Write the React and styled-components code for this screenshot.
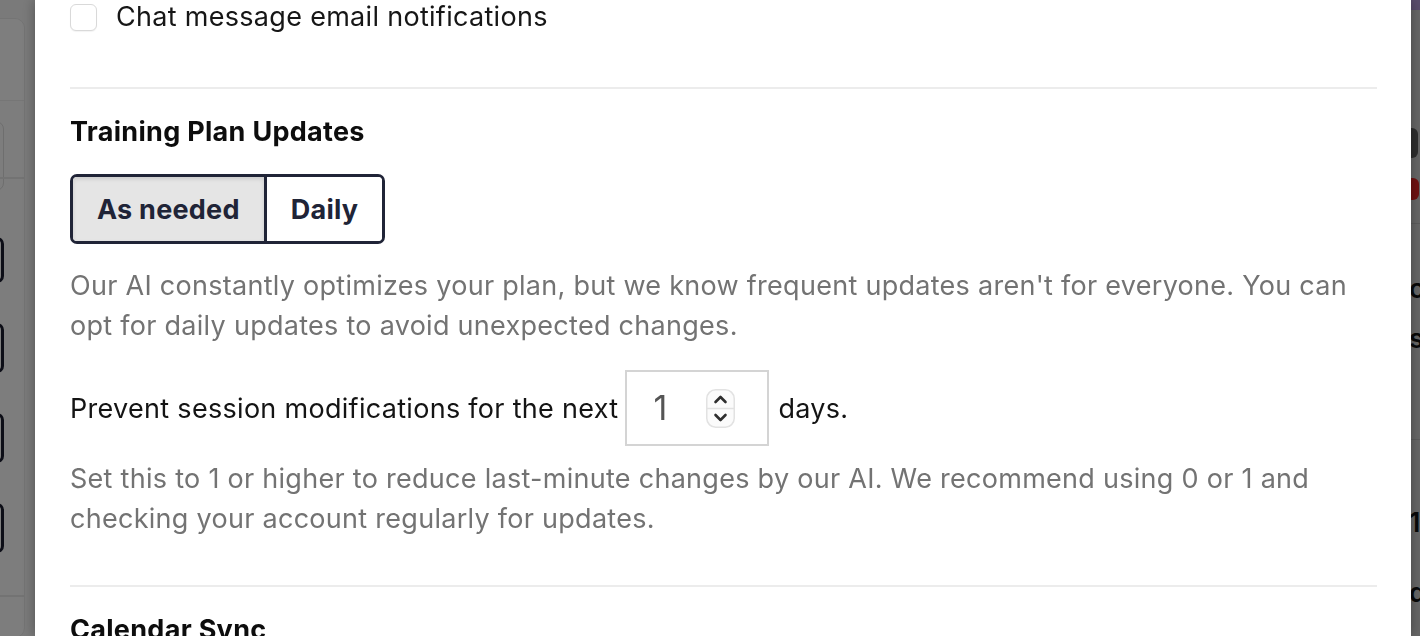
import React from "react";
import styled, { createGlobalStyle } from "styled-components";

const GlobalStyle = createGlobalStyle`
  * { box-sizing: border-box; }
  html, body { margin: 0; padding: 0; height: 100%; overflow: hidden; }
  body { font-family: Inter, "Noto Sans", "Liberation Sans", sans-serif; background: #f5f5f5; }
`;

/* ---------- background page peeking out on both sides ---------- */
const Page = styled.div`
  display: grid;
  grid-template-columns: 35px 1fr 9px;
  height: 100vh;
`;

const LeftPeek = styled.aside`
  overflow: hidden;
  background: #f5f5f5;
  padding-top: 18px;
  display: flex;
  justify-content: flex-end;
`;

const SideCard = styled.div`
  flex: 0 0 120px;
  margin-right: 10px;
  background: #fbfbfb;
  border: 1px solid #e8e8e8;
  border-radius: 10px;
  display: flex;
  flex-direction: column;
  align-items: flex-end;
  height: 620px;
`;

const SideHeader = styled.div`
  align-self: stretch;
  height: 82px;
  background: #fdfdfd;
  border-bottom: 1px solid #ececec;
  border-radius: 10px 10px 0 0;
`;

const SideInput = styled.div`
  width: 100px;
  height: 70px;
  margin: 20px 20px 0 0;
  border: 1px solid #dcdcdc;
  border-radius: 8px;
`;

const SideRule = styled.div`
  align-self: stretch;
  height: 2px;
  background: #e6e6e6;
  margin-top: ${(p) => p.$top}px;
`;

const SideButton = styled.div`
  width: 100px;
  height: ${(p) => p.$h}px;
  margin: ${(p) => p.$top}px 20px 0 0;
  border: 3px solid #1b1d2e;
  border-radius: 7px;
  background: #fff;
`;

const Middle = styled.main``;

const RightPeek = styled.aside`
  overflow: hidden;
  background: #cdcdcd;
  display: flex;
  flex-direction: column;
`;

const PurpleBar = styled.div`
  height: 10px;
  background: #b49ad8;
`;

const DarkPill = styled.div`
  height: 30px;
  width: 7px;
  margin-top: 118px;
  background: #5c5c5c;
  border-radius: 0 6px 6px 0;
`;

const RedPill = styled.div`
  height: 22px;
  width: 8px;
  margin-top: 20px;
  background: #e02424;
  border-radius: 0 6px 6px 0;
`;

const PeekRule = styled.div`
  height: 1px;
  background: #b8b8b8;
  margin-top: ${(p) => p.$top}px;
`;

const PeekText = styled.div`
  font-size: 27px;
  font-weight: 600;
  color: #111;
  white-space: nowrap;
  margin-top: ${(p) => p.$top}px;
  margin-left: -2px;
  line-height: 30px;
`;

/* ---------- overlay and modal ---------- */
const Overlay = styled.div`
  position: fixed;
  inset: 0;
  background: rgba(0, 0, 0, 0.5);
  display: flex;
  padding: 0 9px 0 35px;
`;

const Modal = styled.section`
  flex: 1;
  background: #ffffff;
  box-shadow: 0 0 12px rgba(0, 0, 0, 0.35);
  overflow: hidden;
  padding: 0 34px 0 35px;
  color: #111;
  font-size: 27px;
  letter-spacing: 0.3px;
`;

const CheckRow = styled.label`
  display: flex;
  align-items: center;
  gap: 19px;
  height: 32px;
  color: #161616;
`;

const Checkbox = styled.span`
  flex: 0 0 27px;
  width: 27px;
  height: 27px;
  margin-top: 3px;
  border: 1.5px solid #d9d9d9;
  border-radius: 6px;
  background: #fff;
  box-shadow: 0 1px 1px rgba(0, 0, 0, 0.05);
`;

const Divider = styled.hr`
  border: 0;
  height: 2px;
  background: #ececec;
  margin: ${(p) => p.$top}px 0 0;
`;

const Heading = styled.h2`
  margin: 25px 0 0;
  font-size: 27px;
  font-weight: 700;
  line-height: 36px;
  color: #0d0d0d;
`;

const Segmented = styled.div`
  display: inline-flex;
  margin-top: 24px;
  height: 70px;
  border: 3px solid #202437;
  border-radius: 7px;
  overflow: hidden;
`;

const Segment = styled.button`
  font: inherit;
  font-size: 27px;
  font-weight: 700;
  letter-spacing: 0.25px;
  color: #202437;
  padding: 0 ${(p) => p.$pad}px;
  border: 0;
  background: ${(p) => (p.$active ? "#e5e5e5" : "#ffffff")};
  box-shadow: ${(p) => (p.$active ? "inset 0 2px 4px rgba(0,0,0,0.12)" : "none")};
  & + & {
    border-left: 3px solid #202437;
  }
`;

const Help = styled.p`
  margin: ${(p) => p.$top}px 0 0;
  line-height: 40px;
  color: #737373;
  letter-spacing: 0.28px;
`;

const InlineRow = styled.div`
  display: flex;
  align-items: center;
  margin-top: 24px;
  color: #141414;
  white-space: nowrap;
`;

const NumberBox = styled.div`
  display: flex;
  align-items: center;
  width: 144px;
  height: 76px;
  margin: 0 9px 0 7px;
  border: 2px solid #d4d4d4;
  padding: 0 0 0 26px;
`;

const NumberValue = styled.span`
  font-size: 34px;
  color: #555;
  width: 53px;
  line-height: 1;
`;

function Stepper() {
  return (
    <svg width="29" height="39" viewBox="0 0 29 39" aria-hidden="true">
      <rect x="0.75" y="0.75" width="27.5" height="37.5" rx="9" fill="#fbfbfb" stroke="#e2e2e2" strokeWidth="1.5" />
      <line x1="1" y1="19.5" x2="28" y2="19.5" stroke="#e2e2e2" strokeWidth="1.5" />
      <path d="M9.5 13 L14.5 8 L19.5 13" fill="none" stroke="#2e2e2e" strokeWidth="2.6" strokeLinecap="round" strokeLinejoin="round" />
      <path d="M9.5 26 L14.5 31 L19.5 26" fill="none" stroke="#2e2e2e" strokeWidth="2.6" strokeLinecap="round" strokeLinejoin="round" />
    </svg>
  );
}

export default function App() {
  return (
    <>
      <GlobalStyle />
      <Page>
        <LeftPeek>
          <SideCard>
            <SideHeader />
            <SideInput />
            <SideRule $top={-14} />
            <SideButton $top={58} $h={46} />
            <SideButton $top={40} $h={50} />
            <SideButton $top={40} $h={50} />
            <SideButton $top={40} $h={50} />
            <SideRule $top={42} />
          </SideCard>
        </LeftPeek>
        <Middle />
        <RightPeek>
          <PurpleBar />
          <DarkPill />
          <RedPill />
          <PeekRule $top={23} />
          <PeekText $top={50}>c</PeekText>
          <PeekText $top={20}>s</PeekText>
          <PeekRule $top={85} />
          <PeekText $top={68}>10</PeekText>
          <PeekText $top={40}>d</PeekText>
        </RightPeek>
      </Page>

      <Overlay>
        <Modal>
          <CheckRow>
            <Checkbox />
            Chat message email notifications
          </CheckRow>

          <Divider $top={55} />

          <Heading>Training Plan Updates</Heading>
          <Segmented>
            <Segment $active $pad={24}>As needed</Segment>
            <Segment $pad={24}>Daily</Segment>
          </Segmented>
          <Help $top={22}>
            Our AI constantly optimizes your plan, but we know frequent updates aren't for everyone. You can
            opt for daily updates to avoid unexpected changes.
          </Help>

          <InlineRow>
            Prevent session modifications for the next
            <NumberBox>
              <NumberValue>1</NumberValue>
              <Stepper />
            </NumberBox>
            days.
          </InlineRow>
          <Help $top={13}>
            Set this to 1 or higher to reduce last-minute changes by our AI. We recommend using 0 or 1 and
            checking your account regularly for updates.
          </Help>

          <Divider $top={46} />
          <Heading>Calendar Sync</Heading>
        </Modal>
      </Overlay>
    </>
  );
}
